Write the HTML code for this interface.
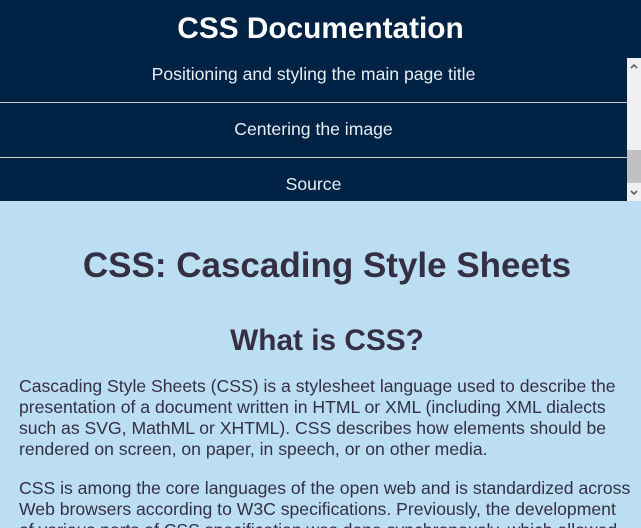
<!DOCTYPE html>
<html style="overflow:hidden;height:528px"><head><style>
body{margin:0;width:641px;height:528px;overflow:hidden;background:#bbdef2;font-family:"Liberation Sans",sans-serif;color:#352f44;position:relative}
header{position:absolute;top:0;left:0;width:641px;height:201px;background:#002244;overflow:hidden}
h1.t{margin:0;position:absolute;top:11px;left:0;width:641px;text-align:center;color:#fff;font-size:29.8px;line-height:36px}
.nav{position:absolute;top:58px;left:0;width:627px;height:143px;overflow:hidden}
.nav div{text-align:center;color:#e8eef5;font-size:17.6px;border-bottom:1px solid #ccc;box-sizing:border-box}
.sb{position:absolute;top:58px;left:627px;width:14px;height:143px;background:#f0f0f0}
.th{position:absolute;top:92px;left:0;width:14px;height:33px;background:#c1c1c1}
main{position:absolute;top:201px;left:0;width:641px;height:327px;overflow:hidden}
h1.m{margin:0;position:absolute;top:45px;width:654px;text-align:center;font-size:35px;line-height:40px}
h2{margin:0;position:absolute;top:123px;width:654px;text-align:center;font-size:29.8px;line-height:34px}
p{margin:0;position:absolute;left:19px;width:616px;font-size:17.6px;line-height:21px}
</style></head><body>
<header>
<h1 class="t">CSS Documentation</h1>
<div class="nav">
<div style="height:45px;line-height:32px">Positioning and styling the main page title</div>
<div style="height:55px;line-height:52px">Centering the image</div>
<div style="height:55px;line-height:52px">Source</div>
</div>
<div class="sb">
<svg style="position:absolute;top:5px;left:3px" width="8" height="6" viewBox="0 0 8 6"><path d="M1 5 L4 2 L7 5" fill="none" stroke="#606060" stroke-width="1.6"/></svg>
<div class="th"></div>
<svg style="position:absolute;top:132px;left:3px" width="8" height="6" viewBox="0 0 8 6"><path d="M1 1 L4 4 L7 1" fill="none" stroke="#606060" stroke-width="1.6"/></svg>
</div>
</header>
<main>
<h1 class="m">CSS: Cascading Style Sheets</h1>
<h2>What is CSS?</h2>
<p style="top:175px">Cascading Style Sheets (CSS) is a stylesheet language used to describe the presentation of a document written in HTML or XML (including XML dialects such as SVG, MathML or XHTML). CSS describes how elements should be rendered on screen, on paper, in speech, or on other media.</p>
<p style="top:277px">CSS is among the core languages of the open web and is standardized across Web browsers according to W3C specifications. Previously, the development of various parts of CSS specification was done synchronously, which allowed</p>
</main>
</body></html>
